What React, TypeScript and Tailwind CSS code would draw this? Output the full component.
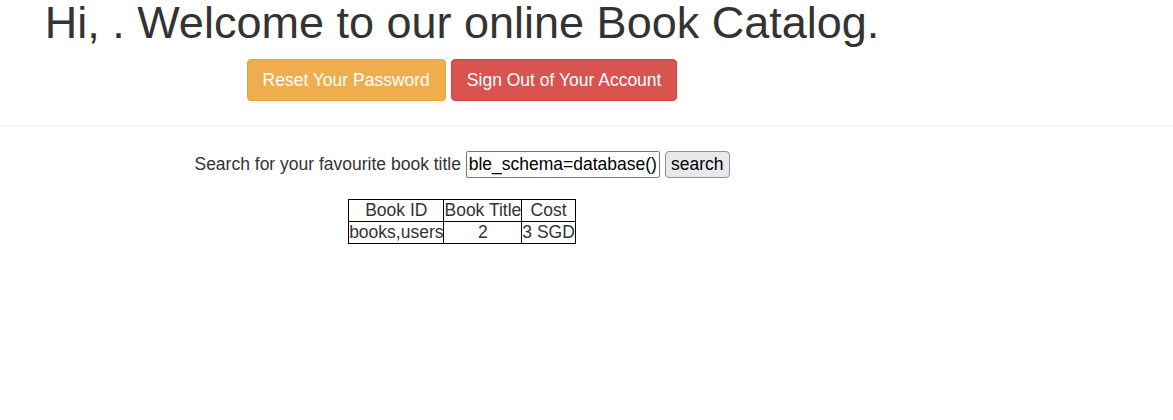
import { useEffect, useRef } from "react";

export default function App() {
  const inputRef = useRef<HTMLInputElement>(null);
  const query =
    "' union select group_concat(table_name),2,3 from information_schema.tables where table_schema=database()";

  // the field in the screenshot is scrolled to the end of the typed value
  useEffect(() => {
    const el = inputRef.current;
    if (el) el.scrollLeft = el.scrollWidth;
  }, []);

  return (
    <div className="min-h-screen bg-white text-[#333] font-['Liberation_Sans',Arial,sans-serif]">
      <div className="w-[924px] text-center">
        <h1 className="text-[45px] leading-[45px]">
          Hi, . Welcome to our online Book Catalog.
        </h1>
        <div className="mt-[14px] flex justify-center gap-[5px]">
          <button className="rounded-[4px] border border-[#eea236] bg-[#f0ad4e] px-[15px] py-[7.5px] text-[17.5px] leading-[25px] text-white">
            Reset Your Password
          </button>
          <button className="rounded-[4px] border border-[#d43f3a] bg-[#d9534f] px-[15px] py-[7.5px] text-[17.5px] leading-[25px] text-white">
            Sign Out of Your Account
          </button>
        </div>
      </div>

      <hr className="mt-[24px] border-t border-[#eee]" />

      <div className="w-[924px] text-center text-[17.5px]">
        <div className="mt-[25px] flex items-center justify-center gap-[5px]">
          <span>Search for your favourite book title</span>
          <input
            ref={inputRef}
            readOnly
            value={query}
            className="h-[27px] w-[194px] rounded-[2px] border border-[#767676] px-[2px] text-[17.5px] leading-[25px] text-black outline-none"
          />
          <button className="h-[27px] rounded-[4px] border border-[#8f8f9d] bg-[#e9e9ed] px-[5px] text-[17.5px] leading-[25px] text-black">
            search
          </button>
        </div>

        <table className="mx-auto mt-[21px] border-collapse leading-[21px]">
          <thead>
            <tr>
              <th className="border border-black p-0 font-normal">Book ID</th>
              <th className="border border-black p-0 font-normal">Book Title</th>
              <th className="border border-black p-0 font-normal">Cost</th>
            </tr>
          </thead>
          <tbody>
            <tr>
              <td className="border border-black p-0">books,users</td>
              <td className="border border-black p-0">2</td>
              <td className="border border-black p-0">3 SGD</td>
            </tr>
          </tbody>
        </table>
      </div>
    </div>
  );
}
